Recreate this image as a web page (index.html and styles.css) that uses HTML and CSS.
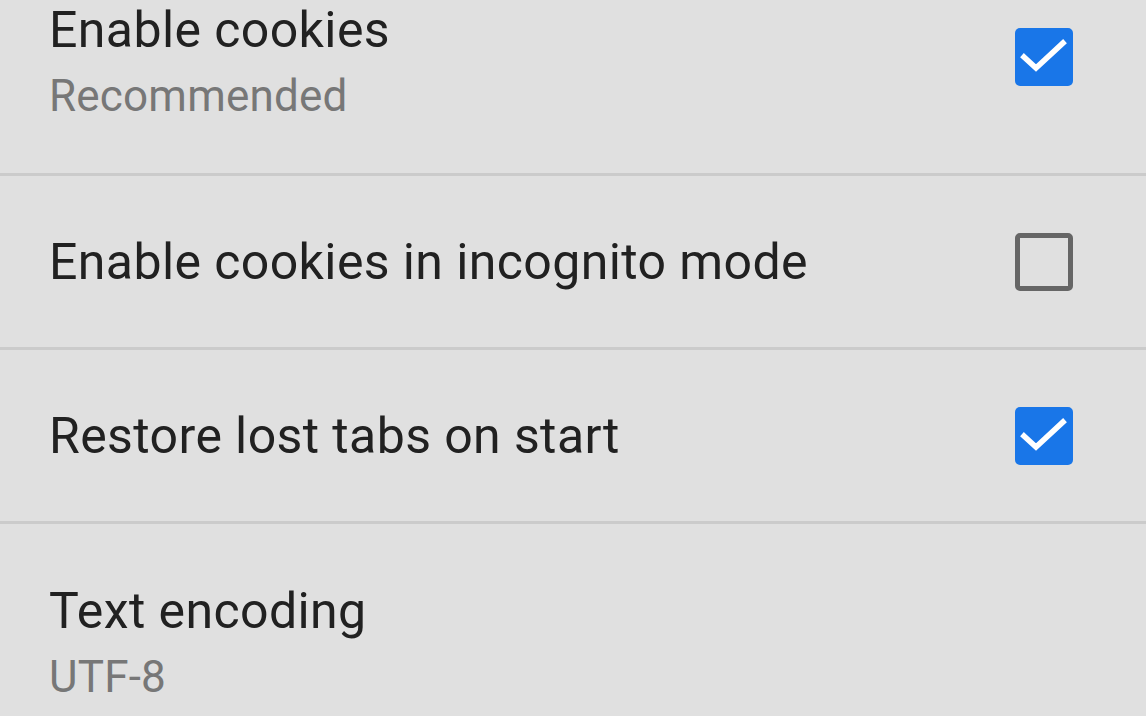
FILE: index.html
```html
<!DOCTYPE html>
<html>
<head>
<meta charset="utf-8">
<link rel="stylesheet" href="styles.css">
</head>
<body>
<div class="list">
  <div class="row two first">
    <div class="text">
      <div class="title">Enable cookies</div>
      <div class="sub">Recommended</div>
    </div>
    <div class="box checked">
      <svg viewBox="0 0 58 58" width="58" height="58"><polyline points="9,29 21,40 48,15" fill="none" stroke="#fff" stroke-width="5.5" stroke-linecap="square"/></svg>
    </div>
  </div>
  <div class="row">
    <div class="text">
      <div class="title">Enable cookies in incognito mode</div>
    </div>
    <div class="box"></div>
  </div>
  <div class="row">
    <div class="text">
      <div class="title">Restore lost tabs on start</div>
    </div>
    <div class="box checked">
      <svg viewBox="0 0 58 58" width="58" height="58"><polyline points="9,29 21,40 48,15" fill="none" stroke="#fff" stroke-width="5.5" stroke-linecap="square"/></svg>
    </div>
  </div>
  <div class="row two last">
    <div class="text">
      <div class="title">Text encoding</div>
      <div class="sub">UTF-8</div>
    </div>
  </div>
</div>
</body>
</html>
```

FILE: styles.css
```css
html, body {
  margin: 0;
  padding: 0;
  background: #e0e0e0;
  font-family: Roboto, "Noto Sans", sans-serif;
  overflow: hidden;
}
.list {
  margin-top: -57px;
}
.row {
  display: flex;
  align-items: center;
  height: 171px;
  box-sizing: content-box;
  padding: 0 73px 0 49px;
  border-bottom: 3px solid #cbcbcb;
}
.row.two {
  height: auto;
  padding-top: 59px;
  padding-bottom: 53px;
}
.row.first .box {
  margin-bottom: 8px;
}
.row.last {
  border-bottom: none;
  padding-bottom: 0;
}
.text {
  flex: 1;
}
.title {
  font-size: 50px;
  line-height: 56px;
  letter-spacing: 0.4px;
  color: #212121;
}
.sub {
  font-size: 44px;
  line-height: 48px;
  letter-spacing: 0.2px;
  margin-top: 14px;
  color: #777;
}
.box {
  width: 58px;
  height: 58px;
  box-sizing: border-box;
  border: 5px solid #666;
  border-radius: 5px;
  flex: none;
}
.box.checked {
  border: none;
  background: #1976e8;
}
.box svg {
  display: block;
}
```
